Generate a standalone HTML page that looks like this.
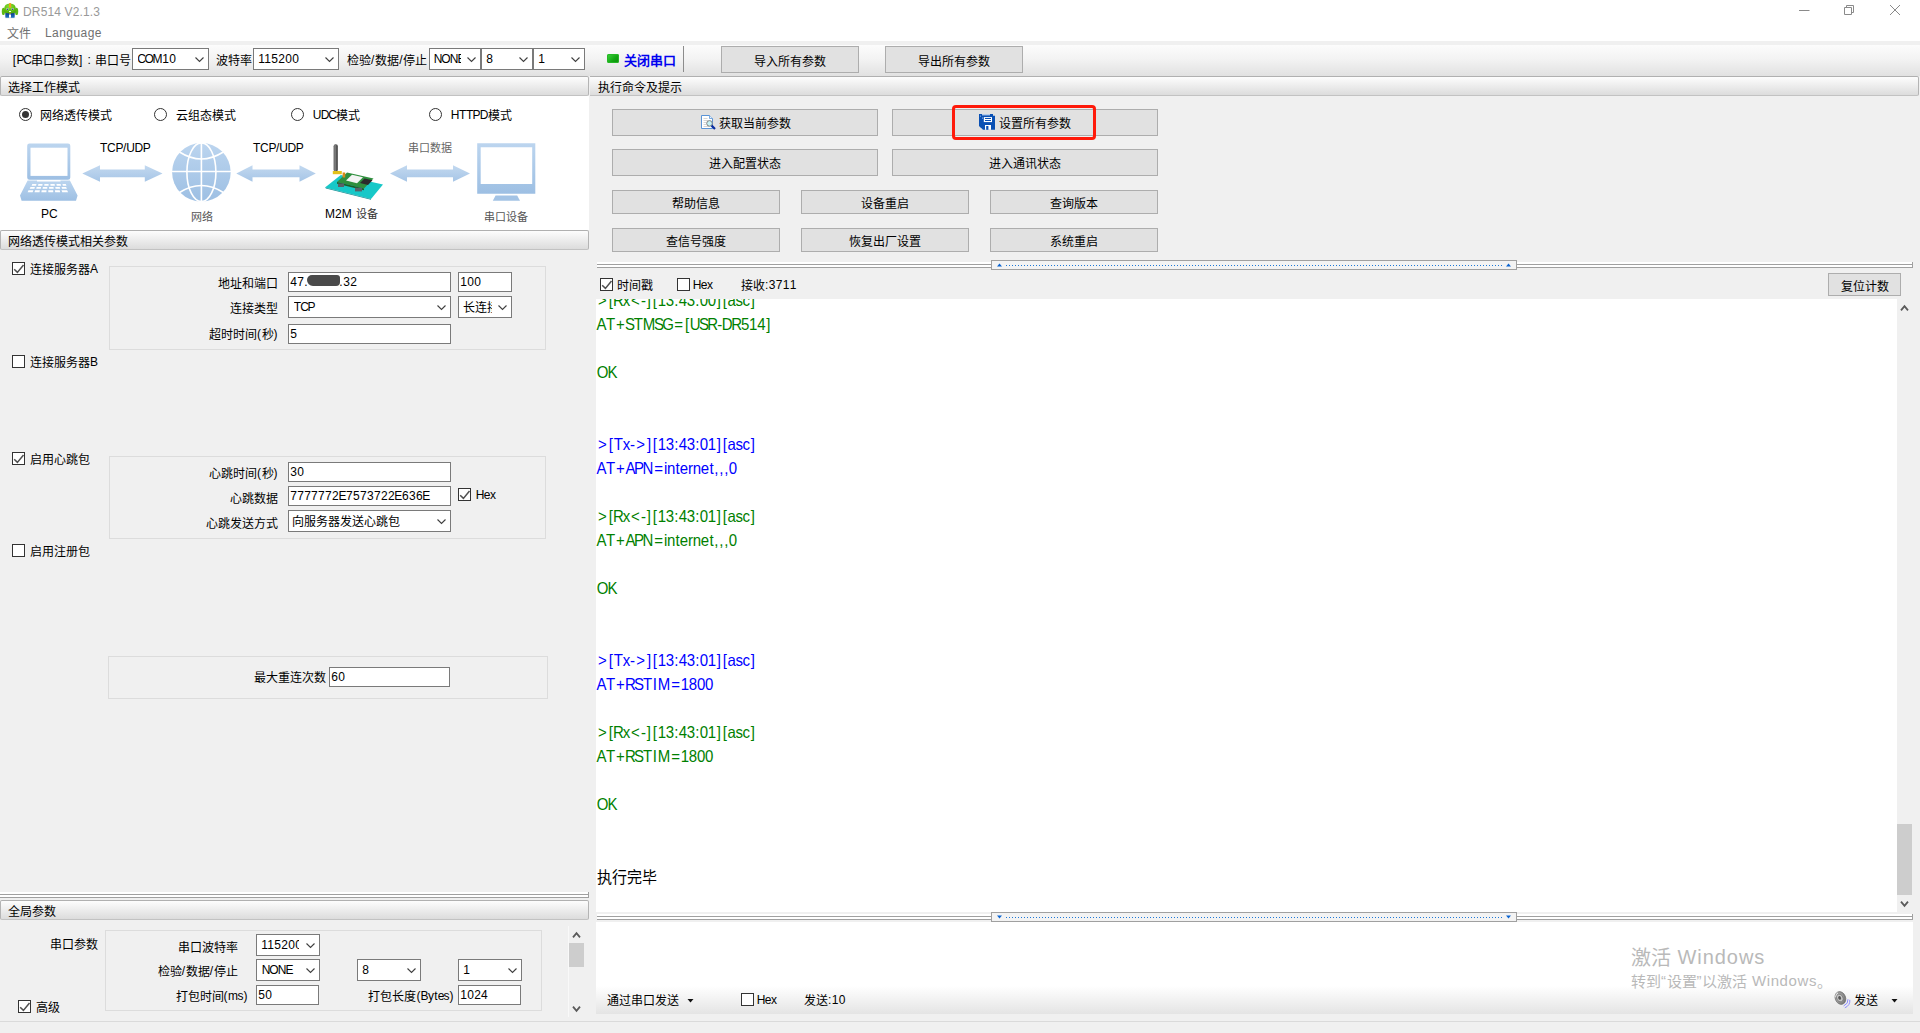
<!DOCTYPE html>
<html lang="zh-CN"><head><meta charset="utf-8"><title>DR514 V2.1.3</title>
<style>
html,body{margin:0;padding:0}
body{width:1920px;height:1033px;overflow:hidden;position:relative;background:#f0f0f0;font-family:"Liberation Sans",sans-serif;font-size:12px;color:#000}
body div,.a{position:absolute}
.t{white-space:nowrap;line-height:14px;font-size:12px}
.c{display:inline-block;width:1em;text-align:center;letter-spacing:0;position:relative;top:1px}
.n0 .c{top:0}
.btn{box-sizing:border-box;border:1px solid #adadad;background:#e1e1e1;text-align:center;white-space:nowrap;font-size:12px}
.inp{box-sizing:border-box;border:1px solid #7a7a7a;background:#fff;padding-left:1px;white-space:nowrap;overflow:hidden;font-size:12px}
.clip{position:absolute;top:0;height:100%;overflow:hidden;white-space:nowrap}
.chk{box-sizing:border-box;width:13px;height:13px;border:1px solid #333;background:#fff}
.rad{box-sizing:border-box;width:13px;height:13px;border:1px solid #333;border-radius:50%;background:#fff}
.rad i{position:absolute;left:2px;top:2px;width:7px;height:7px;border-radius:50%;background:#333}
.hdr{box-sizing:border-box;height:20px;line-height:20px;padding-left:6.5px;border:1px solid #b4b4b4;border-top-color:#b0b0b0;border-bottom-color:#c2c2c2;border-radius:2px;background:linear-gradient(#fdfdfd,#dcdcdc);white-space:nowrap;font-size:12px;overflow:hidden}
.grp{box-sizing:border-box;border:1px solid #dcdcdc}
.ln{position:static;height:22.684px;line-height:22.684px;font-size:15px;white-space:nowrap}
.g{color:#008000}.b{color:#0000ff}.k{color:#000}
.blob{display:inline-block;position:absolute;left:18px;top:2px;width:33px;height:11px;background:#4a4a4a;border-radius:5px 3px 4px 6px}
</style></head>
<body>
<div style="left:0px;top:0px;width:1920px;height:41px;background:#fff"></div>
<svg class="a" style="left:0;top:0" width="20" height="20" viewBox="0 0 20 20">
<defs><radialGradient id="gh" cx=".45" cy=".3" r=".8"><stop offset="0" stop-color="#8fdc3a"/><stop offset=".6" stop-color="#5cc010"/><stop offset="1" stop-color="#4a9e0e"/></radialGradient>
<linearGradient id="gp" x1="0" y1="0" x2="0" y2="1"><stop offset="0" stop-color="#0a3488"/><stop offset="1" stop-color="#2273c0"/></linearGradient></defs>
<ellipse cx="10" cy="17.7" rx="5.5" ry=".6" fill="#d8d8d8"/>
<ellipse cx="3.4" cy="11.4" rx="1.6" ry="3.7" fill="#5cb812"/><ellipse cx="16.6" cy="11.4" rx="1.6" ry="3.7" fill="#5cb812"/>
<path d="M5.3 12.4 H14.7 V17 Q14.7 17.7 14 17.7 H11 V14.6 H9 V17.7 H6 Q5.3 17.7 5.3 17 Z" fill="url(#gp)"/>
<path d="M4 10 Q4 3.6 10 3.6 Q16 3.6 16 10 Q16 13.2 13.4 13.2 H6.6 Q4 13.2 4 10 Z" fill="url(#gh)"/>
<rect x="9" y="3" width="2.1" height="4.7" rx=".8" fill="#f2a21e"/>
<circle cx="7.4" cy="9.1" r="1.15" fill="#dfe8d0"/><circle cx="12.6" cy="9.1" r="1.15" fill="#dfe8d0"/>
<circle cx="7.4" cy="9.2" r=".75" fill="#2c2a98"/><circle cx="12.6" cy="9.2" r=".75" fill="#2c2a98"/>
<rect x="9" y="11.1" width="2" height=".9" rx=".2" fill="#fff"/>
<rect x="9.3" y="12.6" width="1.4" height="1.4" fill="#c8a01c"/>
</svg>
<div class="t" style="left:23px;top:5px;color:#999;font-size:12px;letter-spacing:.15px">DR514 V2.1.3</div>
<svg class="a" style="left:1790px;top:0" width="130" height="22" viewBox="0 0 130 22"><g fill="none" stroke="#8a8a8a" stroke-width="1"><path d="M9 10.5 H19.5"/><path d="M54.5 7.5 H61.5 V14.5 H54.5 Z"/><path d="M56.5 7.5 V5.5 H63.5 V12.5 H61.5"/><path d="M100 5 L110 15 M110 5 L100 15"/></g></svg>
<div class="t" style="left:7px;top:26px;color:#707070"><span class="c">文</span><span class="c">件</span></div>
<div class="t" style="left:45px;top:26px;color:#707070;letter-spacing:.45px">Language</div>
<div style="left:0px;top:41px;width:1920px;height:4px;background:#f0f0f0"></div>
<div style="left:0px;top:45px;width:1920px;height:31px;background:linear-gradient(#fcfcfc 0%,#f3f3f3 45%,#e1e1e1 100%)"></div>
<div class="t" style="left:12px;top:53px;"><span style="margin-left:0.8px"></span><span style="letter-spacing:0.3px">[</span><span style="letter-spacing:-1.3px">P</span><span style="letter-spacing:-0.8px">C</span><span class="c">串</span><span class="c">口</span><span class="c">参</span><span style="letter-spacing:0.8px"><span class="c">数</span></span><span style="letter-spacing:1.2px">]</span><span style="letter-spacing:0.7px"> :</span><span style="letter-spacing:0.3px"> </span><span class="c">串</span><span class="c">口</span><span class="c">号</span></div>
<div class="inp" style="left:132px;top:48px;width:77px;height:22px;line-height:20px;padding-left:5px"><span class="clip" style="width:57px"><span style="margin-left:-0.8px"></span><span style="letter-spacing:-1.5px">C</span><span style="letter-spacing:-1.2px">O</span><span style="letter-spacing:-0.3px">M</span><span style="letter-spacing:0.3px">1</span><span style="letter-spacing:0.2px">0</span></span><svg class="a" style="left:62px;top:8px" width="9" height="6" viewBox="0 0 9 6"><path d="M0.5 0.5 L4.5 4.5 L8.5 0.5" fill="none" stroke="#404040" stroke-width="1.1"/></svg></div>
<div class="t" style="left:216px;top:53px;"><span class="c">波</span><span class="c">特</span><span class="c">率</span></div>
<div class="inp" style="left:253px;top:48px;width:86px;height:22px;line-height:20px;padding-left:4px"><span class="clip" style="width:66px"><span style="margin-left:0.2px"></span><span style="letter-spacing:0.3px">11520</span><span style="letter-spacing:0.2px">0</span></span><svg class="a" style="left:71px;top:8px" width="9" height="6" viewBox="0 0 9 6"><path d="M0.5 0.5 L4.5 4.5 L8.5 0.5" fill="none" stroke="#404040" stroke-width="1.1"/></svg></div>
<div class="t" style="left:347px;top:53px;"><span class="c">检</span><span style="letter-spacing:0.8px"><span class="c">验</span>/</span><span class="c">数</span><span style="letter-spacing:0.8px"><span class="c">据</span>/</span><span class="c">停</span><span class="c">止</span></div>
<div class="inp" style="left:429px;top:48px;width:52px;height:22px;line-height:20px;padding-left:4px"><span class="clip" style="width:27px"><span style="margin-left:-0.3px"></span><span style="letter-spacing:-1px">NO</span><span style="letter-spacing:-0.8px">N</span><span style="letter-spacing:-0.5px">E</span></span><svg class="a" style="left:37px;top:8px" width="9" height="6" viewBox="0 0 9 6"><path d="M0.5 0.5 L4.5 4.5 L8.5 0.5" fill="none" stroke="#404040" stroke-width="1.1"/></svg></div>
<div class="inp" style="left:481px;top:48px;width:52px;height:22px;line-height:20px;padding-left:4px"><span class="clip" style="width:32px"><span style="margin-left:0.2px"></span><span style="letter-spacing:0.2px">8</span></span><svg class="a" style="left:37px;top:8px" width="9" height="6" viewBox="0 0 9 6"><path d="M0.5 0.5 L4.5 4.5 L8.5 0.5" fill="none" stroke="#404040" stroke-width="1.1"/></svg></div>
<div class="inp" style="left:533px;top:48px;width:52px;height:22px;line-height:20px;padding-left:4px"><span class="clip" style="width:32px"><span style="margin-left:0.2px"></span><span style="letter-spacing:0.2px">1</span></span><svg class="a" style="left:37px;top:8px" width="9" height="6" viewBox="0 0 9 6"><path d="M0.5 0.5 L4.5 4.5 L8.5 0.5" fill="none" stroke="#404040" stroke-width="1.1"/></svg></div>
<div style="left:607px;top:54px;width:12px;height:9px;background:linear-gradient(135deg,#3fd53f,#12a512 60%,#0c8c0c);border-radius:2px;box-shadow:inset 0 0 0 1px #25b825"></div>
<div class="t" style="left:624px;top:53px;color:#0000f0;font-weight:bold;font-size:13px"><span class="c">关</span><span class="c">闭</span><span class="c">串</span><span class="c">口</span></div>
<div style="left:683px;top:46px;width:1px;height:26px;background:#8c8c8c"></div>
<div class="btn" style="left:721px;top:46px;width:138px;height:27px;line-height:29px"><span class="c">导</span><span class="c">入</span><span class="c">所</span><span class="c">有</span><span class="c">参</span><span class="c">数</span></div>
<div class="btn" style="left:885px;top:46px;width:138px;height:27px;line-height:29px"><span class="c">导</span><span class="c">出</span><span class="c">所</span><span class="c">有</span><span class="c">参</span><span class="c">数</span></div>
<div class="hdr" style="left:0px;top:76px;width:589px"><span class="c">选</span><span class="c">择</span><span class="c">工</span><span class="c">作</span><span class="c">模</span><span class="c">式</span></div>
<div style="left:0px;top:96px;width:589px;height:134px;background:#fff"></div>
<div class="rad" style="left:18.5px;top:108.0px"><i></i></div>
<div class="t" style="left:40px;top:108px;"><span class="c">网</span><span class="c">络</span><span class="c">透</span><span class="c">传</span><span class="c">模</span><span class="c">式</span></div>
<div class="rad" style="left:154.0px;top:108.0px"></div>
<div class="t" style="left:176px;top:108px;"><span class="c">云</span><span class="c">组</span><span class="c">态</span><span class="c">模</span><span class="c">式</span></div>
<div class="rad" style="left:291.0px;top:108.0px"></div>
<div class="t" style="left:313px;top:108px;"><span style="margin-left:-0.3px"></span><span style="letter-spacing:-0.7px">U</span><span style="letter-spacing:-1.2px">D</span><span style="letter-spacing:-0.8px">C</span><span class="c">模</span><span class="c">式</span></div>
<div class="rad" style="left:429.0px;top:108.0px"></div>
<div class="t" style="left:451px;top:108px;"><span style="margin-left:-0.3px"></span><span style="letter-spacing:-0.5px">H</span><span style="letter-spacing:-0.3px">T</span><span style="letter-spacing:-0.7px">T</span><span style="letter-spacing:-0.8px">P</span><span style="letter-spacing:-0.3px">D</span><span class="c">模</span><span class="c">式</span></div>
<svg class="a" style="left:0;top:130px" width="590" height="100" viewBox="0 130 590 100">
<defs>
<linearGradient id="g1" x1="0" y1="0" x2="0" y2="1"><stop offset="0" stop-color="#bcd5ef"/><stop offset="1" stop-color="#9dbfe3"/></linearGradient>
<linearGradient id="g2" x1="0" y1="0" x2="0" y2="1"><stop offset="0" stop-color="#c3d9f0"/><stop offset="1" stop-color="#a6c5e6"/></linearGradient>
</defs>
<!-- laptop -->
<path d="M29.5 143.5 H68 a2.3 2.3 0 0 1 2.3 2.3 V177.4 a2.3 2.3 0 0 1 -2.3 2.3 H29.5 a2.3 2.3 0 0 1 -2.3 -2.3 V145.8 a2.3 2.3 0 0 1 2.3 -2.3 Z" fill="url(#g1)"/>
<rect x="30.5" y="147.7" width="37" height="28.2" fill="#fff"/>
<path d="M27.6 180.4 H37 V181.5 H60.5 V180.4 H69.9 L77.6 195.4 L76 200.8 H21.6 L20 195.4 Z" fill="url(#g1)"/>
<g fill="#fff"><path d="M32.3 184 h4.2 l-.5 1.7 h-4.4z M38.4 184 h4.2 l-.3 1.7 h-4.3z M44.4 184 h4.2 v1.7 h-4.3z M50.4 184 h4.2 l.3 1.7 h-4.4z M56.4 184 h4.2 l.5 1.7 h-4.3z M62.4 184 h3.4 l.7 1.7 h-3.6z"/>
<path d="M30.5 186.9 h4.4 l-.5 1.9 h-4.7z M36.7 186.9 h4.4 l-.3 1.9 h-4.6z M42.9 186.9 h4.4 l-.1 1.9 h-4.6z M49.1 186.9 h4.4 l.2 1.9 h-4.6z M55.3 186.9 h4.4 l.5 1.9 h-4.6z M61.5 186.9 h4.6 l.8 1.9 h-4.8z"/>
<path d="M28.5 190.2 h4.8 l-.6 2.1 h-5.1z M35.1 190.2 h4.8 l-.4 2.1 h-5z M41.7 190.2 h4.8 l-.1 2.1 h-5z M48.3 190.2 h4.8 l.2 2.1 h-5z M54.9 190.2 h4.8 l.5 2.1 h-5z M61.5 190.2 h5.6 l1 2.1 h-5.9z"/></g>
<!-- arrows -->
<g fill="url(#g2)">
<path d="M82.3 173.4 L100 165.2 V169.4 H144.8 V165.2 L162.5 173.4 L144.8 181.8 V177.3 H100 V181.8 Z"/>
<path d="M236.3 173.4 L252.5 165.2 V169.4 H299.5 V165.2 L315.8 173.4 L299.5 181.8 V177.3 H252.5 V181.8 Z"/>
<path d="M390 173.4 L407 165.2 V169.4 H453 V165.2 L470 173.4 L453 181.8 V177.3 H407 V181.8 Z"/>
</g>
<!-- globe -->
<circle cx="201.4" cy="172.2" r="29.3" fill="url(#g1)"/>
<g fill="none" stroke="#fff" stroke-width="1.6">
<path d="M201.4 142 V203"/><path d="M171 171.5 H232"/>
<ellipse cx="201.4" cy="172.2" rx="14.5" ry="29.3"/>
<path d="M179.5 152 Q201.4 166 223.3 152"/><path d="M179.5 192.5 Q201.4 178.5 223.3 192.5"/>
</g>
<!-- m2m device -->
<path d="M325 187.5 L340.8 175 L383 184.5 L371 199 Z" fill="#17c8c8"/>
<path d="M326 188.6 L371 199.8 L371 199 L325 187.5Z" fill="#0e8f94"/>
<path d="M337 182 L347 172.5 L373.5 178.5 L364 188.5 Z" fill="#2f8f3e"/>
<path d="M337 182 L364 188.5 V190.3 L337 183.8Z" fill="#1d5e28"/>
<path d="M346 180.5 L352 174.8 L363 177.3 L357 183.2 Z" fill="#f4f4f4"/>
<path d="M360 183 L364.5 178.5 L372.5 180.3 L368 185 Z" fill="#2b2b2b"/>
<rect x="338" y="183.5" width="6" height="3.5" fill="#5a6068"/><rect x="355" y="187.8" width="7" height="3.6" fill="#5a6068"/>
<rect x="333.6" y="144.2" width="4.3" height="27.5" rx="2" fill="#555"/>
<rect x="334.4" y="145" width="1.3" height="26" fill="#888"/>
<path d="M332.8 171 h9 v3.2 h-9z" fill="#e3c21a"/><rect x="342.6" y="172.5" width="2.6" height="5" fill="#d98a1c"/>
<!-- monitor -->
<path d="M477.2 143.3 H535.3 V193.8 H477.2 Z M480.7 147.2 V184 H532.2 V147.2 Z" fill="url(#g1)" fill-rule="evenodd"/>
<path d="M495.6 195.6 H517.2 L520 200.8 H492.8 Z" fill="#a3c3e5"/>
</svg>
<div class="t" style="left:100px;top:141px;font-size:12px;letter-spacing:-.3px">TCP/UDP</div>
<div class="t" style="left:253px;top:141px;font-size:12px;letter-spacing:-.3px">TCP/UDP</div>
<div class="t" style="left:41px;top:207px;font-size:12px">PC</div>
<div class="t s" style="left:191px;top:209px;font-size:11px;color:#555"><span class="c">网</span><span class="c">络</span></div>
<div class="t" style="left:325px;top:207px;font-size:12px">M2M <span class="s n0" style="font-size:11px;color:#333;margin-left:1px"><span class="c">设</span><span class="c">备</span></span></div>
<div class="t s" style="left:408px;top:140px;font-size:11px;color:#666"><span class="c">串</span><span class="c">口</span><span class="c">数</span><span class="c">据</span></div>
<div class="t s" style="left:484px;top:209px;font-size:11px;color:#555"><span class="c">串</span><span class="c">口</span><span class="c">设</span><span class="c">备</span></div>
<div class="hdr" style="left:0px;top:230px;width:589px"><span class="c">网</span><span class="c">络</span><span class="c">透</span><span class="c">传</span><span class="c">模</span><span class="c">式</span><span class="c">相</span><span class="c">关</span><span class="c">参</span><span class="c">数</span></div>
<div class="chk" style="left:12px;top:262px"><svg width="13" height="13" viewBox="0 0 13 13" style="position:absolute;left:-1px;top:-1px"><path d="M2.2 7.2 L5.4 10.4 L11.5 3" fill="none" stroke="#505050" stroke-width="1.5"/></svg></div>
<div class="t" style="left:30px;top:262px;"><span class="c">连</span><span class="c">接</span><span class="c">服</span><span class="c">务</span><span style="letter-spacing:-0.5px"><span class="c">器</span>A</span></div>
<div class="grp" style="left:109px;top:266px;width:437px;height:84px"></div>
<div class="t" style="left:150px;top:276px;width:128px;text-align:right;"><span class="c">地</span><span class="c">址</span><span class="c">和</span><span class="c">端</span><span class="c">口</span></div>
<div class="inp" style="left:288px;top:272px;width:163px;height:20px;line-height:18px;"><span style="margin-left:0.2px"></span><span style="letter-spacing:0.3px">4</span><span style="letter-spacing:0.5px">7</span><span style="letter-spacing:0.3px">.</span><span class="blob"></span><span class="a" style="left:50px;top:0"><span style="margin-left:0.3px"></span><span style="letter-spacing:0.5px">.</span><span style="letter-spacing:0.3px">3</span><span style="letter-spacing:0.2px">2</span></span></div>
<div class="inp" style="left:458px;top:272px;width:54px;height:20px;line-height:18px;"><span style="margin-left:0.2px"></span><span style="letter-spacing:0.3px">10</span><span style="letter-spacing:0.2px">0</span></div>
<div class="t" style="left:150px;top:301px;width:128px;text-align:right;"><span class="c">连</span><span class="c">接</span><span class="c">类</span><span class="c">型</span></div>
<div class="inp" style="left:288px;top:296px;width:163px;height:22px;line-height:20px;padding-left:5px"><span class="clip" style="width:143px"><span style="margin-left:-0.2px"></span><span style="letter-spacing:-1px">T</span><span style="letter-spacing:-1.3px">C</span><span style="letter-spacing:-0.5px">P</span></span><svg class="a" style="left:148px;top:8px" width="9" height="6" viewBox="0 0 9 6"><path d="M0.5 0.5 L4.5 4.5 L8.5 0.5" fill="none" stroke="#404040" stroke-width="1.1"/></svg></div>
<div class="inp" style="left:458px;top:296px;width:54px;height:22px;line-height:20px;padding-left:4px"><span class="clip" style="width:29px"><span class="c">长</span><span class="c">连</span><span class="c">接</span></span><svg class="a" style="left:39px;top:8px" width="9" height="6" viewBox="0 0 9 6"><path d="M0.5 0.5 L4.5 4.5 L8.5 0.5" fill="none" stroke="#404040" stroke-width="1.1"/></svg></div>
<div class="t" style="left:150px;top:327px;width:128px;text-align:right;"><span class="c">超</span><span class="c">时</span><span class="c">时</span><span style="letter-spacing:0.5px"><span class="c">间</span>(<span class="c">秒</span>)</span></div>
<div class="inp" style="left:288px;top:324px;width:163px;height:20px;line-height:18px;"><span style="margin-left:0.2px"></span><span style="letter-spacing:0.2px">5</span></div>
<div class="chk" style="left:12px;top:355px"></div>
<div class="t" style="left:30px;top:355px;"><span class="c">连</span><span class="c">接</span><span class="c">服</span><span class="c">务</span><span style="letter-spacing:-0.5px"><span class="c">器</span>B</span></div>
<div class="chk" style="left:12px;top:452px"><svg width="13" height="13" viewBox="0 0 13 13" style="position:absolute;left:-1px;top:-1px"><path d="M2.2 7.2 L5.4 10.4 L11.5 3" fill="none" stroke="#505050" stroke-width="1.5"/></svg></div>
<div class="t" style="left:30px;top:452px;"><span class="c">启</span><span class="c">用</span><span class="c">心</span><span class="c">跳</span><span class="c">包</span></div>
<div class="grp" style="left:109px;top:456px;width:437px;height:83px"></div>
<div class="t" style="left:150px;top:466px;width:128px;text-align:right;"><span class="c">心</span><span class="c">跳</span><span class="c">时</span><span style="letter-spacing:0.5px"><span class="c">间</span>(<span class="c">秒</span>)</span></div>
<div class="inp" style="left:288px;top:462px;width:163px;height:20px;line-height:18px;"><span style="margin-left:0.2px"></span><span style="letter-spacing:0.3px">3</span><span style="letter-spacing:0.2px">0</span></div>
<div class="t" style="left:150px;top:491px;width:128px;text-align:right;"><span class="c">心</span><span class="c">跳</span><span class="c">数</span><span class="c">据</span></div>
<div class="inp" style="left:288px;top:486px;width:163px;height:20px;line-height:18px;"><span style="margin-left:0.2px"></span><span style="letter-spacing:0.3px">777777</span><span style="letter-spacing:-0.3px">2E</span><span style="letter-spacing:0.3px">757372</span><span style="letter-spacing:-0.3px">2E</span><span style="letter-spacing:0.3px">63</span><span style="letter-spacing:-0.3px">6</span><span style="letter-spacing:-0.5px">E</span></div>
<div class="chk" style="left:458px;top:488px"><svg width="13" height="13" viewBox="0 0 13 13" style="position:absolute;left:-1px;top:-1px"><path d="M2.2 7.2 L5.4 10.4 L11.5 3" fill="none" stroke="#505050" stroke-width="1.5"/></svg></div>
<div class="t" style="left:476px;top:488px;"><span style="margin-left:-0.3px"></span><span style="letter-spacing:-0.7px">H</span><span style="letter-spacing:-0.3px">e</span>x</div>
<div class="t" style="left:150px;top:516px;width:128px;text-align:right;"><span class="c">心</span><span class="c">跳</span><span class="c">发</span><span class="c">送</span><span class="c">方</span><span class="c">式</span></div>
<div class="inp" style="left:288px;top:510px;width:163px;height:22px;line-height:20px;padding-left:3px"><span class="clip" style="width:143px"><span class="c">向</span><span class="c">服</span><span class="c">务</span><span class="c">器</span><span class="c">发</span><span class="c">送</span><span class="c">心</span><span class="c">跳</span><span class="c">包</span></span><svg class="a" style="left:148px;top:8px" width="9" height="6" viewBox="0 0 9 6"><path d="M0.5 0.5 L4.5 4.5 L8.5 0.5" fill="none" stroke="#404040" stroke-width="1.1"/></svg></div>
<div class="chk" style="left:12px;top:544px"></div>
<div class="t" style="left:30px;top:544px;"><span class="c">启</span><span class="c">用</span><span class="c">注</span><span class="c">册</span><span class="c">包</span></div>
<div class="grp" style="left:108px;top:656px;width:440px;height:43px"></div>
<div class="t" style="left:200px;top:670px;width:126px;text-align:right;"><span class="c">最</span><span class="c">大</span><span class="c">重</span><span class="c">连</span><span class="c">次</span><span class="c">数</span></div>
<div class="inp" style="left:329px;top:667px;width:121px;height:20px;line-height:18px;"><span style="margin-left:0.2px"></span><span style="letter-spacing:0.3px">6</span><span style="letter-spacing:0.2px">0</span></div>
<div style="left:0px;top:892px;width:589px;height:6px;background:#fff"></div>
<div style="left:0px;top:894px;width:589px;height:1px;background:#a0a0a0"></div>
<div style="left:0px;top:897px;width:589px;height:1px;background:#a0a0a0"></div>
<div style="left:588px;top:892px;width:1px;height:6px;background:#a0a0a0"></div>
<div class="hdr" style="left:0px;top:900px;width:589px"><span class="c">全</span><span class="c">局</span><span class="c">参</span><span class="c">数</span></div>
<div class="t" style="left:50px;top:937px;"><span class="c">串</span><span class="c">口</span><span class="c">参</span><span class="c">数</span></div>
<div class="grp" style="left:105px;top:930px;width:437px;height:81px"></div>
<div class="t" style="left:140px;top:940px;width:98px;text-align:right;"><span class="c">串</span><span class="c">口</span><span class="c">波</span><span class="c">特</span><span class="c">率</span></div>
<div class="inp" style="left:256px;top:934px;width:64px;height:22px;line-height:20px;padding-left:4px"><span class="clip" style="width:38px"><span style="margin-left:0.2px"></span><span style="letter-spacing:0.3px">11520</span><span style="letter-spacing:0.2px">0</span></span><svg class="a" style="left:49px;top:8px" width="9" height="6" viewBox="0 0 9 6"><path d="M0.5 0.5 L4.5 4.5 L8.5 0.5" fill="none" stroke="#404040" stroke-width="1.1"/></svg></div>
<div class="t" style="left:140px;top:964px;width:98px;text-align:right;"><span class="c">检</span><span style="letter-spacing:0.8px"><span class="c">验</span>/</span><span class="c">数</span><span style="letter-spacing:0.8px"><span class="c">据</span>/</span><span class="c">停</span><span class="c">止</span></div>
<div class="inp" style="left:256px;top:959px;width:64px;height:22px;line-height:20px;padding-left:5px"><span class="clip" style="width:44px"><span style="margin-left:-0.3px"></span><span style="letter-spacing:-1px">NO</span><span style="letter-spacing:-0.8px">N</span><span style="letter-spacing:-0.5px">E</span></span><svg class="a" style="left:49px;top:8px" width="9" height="6" viewBox="0 0 9 6"><path d="M0.5 0.5 L4.5 4.5 L8.5 0.5" fill="none" stroke="#404040" stroke-width="1.1"/></svg></div>
<div class="inp" style="left:357px;top:959px;width:64px;height:22px;line-height:20px;padding-left:4px"><span class="clip" style="width:44px"><span style="margin-left:0.2px"></span><span style="letter-spacing:0.2px">8</span></span><svg class="a" style="left:49px;top:8px" width="9" height="6" viewBox="0 0 9 6"><path d="M0.5 0.5 L4.5 4.5 L8.5 0.5" fill="none" stroke="#404040" stroke-width="1.1"/></svg></div>
<div class="inp" style="left:458px;top:959px;width:64px;height:22px;line-height:20px;padding-left:4px"><span class="clip" style="width:44px"><span style="margin-left:0.2px"></span><span style="letter-spacing:0.2px">1</span></span><svg class="a" style="left:49px;top:8px" width="9" height="6" viewBox="0 0 9 6"><path d="M0.5 0.5 L4.5 4.5 L8.5 0.5" fill="none" stroke="#404040" stroke-width="1.1"/></svg></div>
<div class="t" style="left:140px;top:989px;width:108px;text-align:right;"><span class="c">打</span><span class="c">包</span><span class="c">时</span><span style="letter-spacing:0.5px"><span class="c">间</span>(</span><span style="letter-spacing:-0.5px">m</span>s<span style="letter-spacing:0.5px">)</span></div>
<div class="inp" style="left:256px;top:985px;width:63px;height:20px;line-height:18px;"><span style="margin-left:0.2px"></span><span style="letter-spacing:0.3px">5</span><span style="letter-spacing:0.2px">0</span></div>
<div class="t" style="left:340px;top:989px;width:114px;text-align:right;"><span class="c">打</span><span class="c">包</span><span class="c">长</span><span style="letter-spacing:0.5px"><span class="c">度</span></span>(<span style="letter-spacing:-0.5px">B</span><span style="letter-spacing:0.3px">y</span>t<span style="letter-spacing:-0.8px">e</span>s<span style="letter-spacing:0.5px">)</span></div>
<div class="inp" style="left:458px;top:985px;width:63px;height:20px;line-height:18px;"><span style="margin-left:0.2px"></span><span style="letter-spacing:0.3px">102</span><span style="letter-spacing:0.2px">4</span></div>
<div style="left:568px;top:926px;width:1px;height:91px;background:#f9f9f9"></div>
<div style="left:569px;top:943px;width:15px;height:24px;background:#cdcdcd"></div>
<svg class="a" style="left:572px;top:931px" width="9" height="8" viewBox="0 0 9 8"><path d="M1 6.3 L4.5 2.2 L8 6.3" fill="none" stroke="#5a5a5a" stroke-width="1.8"/></svg>
<svg class="a" style="left:572px;top:1005px" width="9" height="8" viewBox="0 0 9 8"><path d="M1 1.7 L4.5 5.8 L8 1.7" fill="none" stroke="#5a5a5a" stroke-width="1.8"/></svg>
<div class="chk" style="left:18px;top:1000px"><svg width="13" height="13" viewBox="0 0 13 13" style="position:absolute;left:-1px;top:-1px"><path d="M2.2 7.2 L5.4 10.4 L11.5 3" fill="none" stroke="#505050" stroke-width="1.5"/></svg></div>
<div class="t" style="left:36px;top:1000px;"><span class="c">高</span><span class="c">级</span></div>
<div class="hdr" style="left:590px;top:76px;width:1329px;padding-left:7.5px;border-left:none;border-radius:0 2px 2px 0"><span class="c">执</span><span class="c">行</span><span class="c">命</span><span class="c">令</span><span class="c">及</span><span class="c">提</span><span class="c">示</span></div>
<div class="btn" style="left:612px;top:109px;width:266px;height:27px;line-height:27px"><svg width="16" height="16" viewBox="0 0 16 16" style="vertical-align:-3px;margin-right:3px"><path d="M1.5 1.5 H9.5 L12.5 4.5 V14.5 H1.5 Z" fill="#fff" stroke="#5b94d6" stroke-width="1"/><path d="M9.5 1.5 V4.5 H12.5" fill="#e8f1fb" stroke="#5b94d6" stroke-width=".8"/><path d="M3.5 4.5 H7.5 M3.5 6.5 H8 M3.5 8.5 H6 M3.5 10.5 H6 M3.5 12.5 H9" stroke="#d6d6d6" stroke-width="1"/><circle cx="9.5" cy="9.4" r="2.8" fill="#c5f2f6" stroke="#7d7d7d" stroke-width="1"/><path d="M11.6 11.6 L15 15" stroke="#0a2fa0" stroke-width="2.2"/></svg><span class="c">获</span><span class="c">取</span><span class="c">当</span><span class="c">前</span><span class="c">参</span><span class="c">数</span></div>
<div class="btn" style="left:892px;top:109px;width:266px;height:27px;line-height:27px"><svg width="16" height="16" viewBox="0 0 16 16" style="vertical-align:-3px;margin-right:4px"><path d="M0 0 H14 V14 H2 L0 12 Z" fill="#0a50b4"/><path d="M2 1.7 H16 V15.8 H4 L2 13.8 Z" fill="#0a50b4"/><path d="M3 0.8 H11" stroke="#fff" stroke-width="1"/><rect x="4.8" y="3.1" width="8.2" height="5" fill="#fff"/><path d="M6 4.5 H12 M6 6.5 H12" stroke="#0a50b4" stroke-width="1"/><rect x="6" y="11" width="6" height="4.8" fill="#fff"/><rect x="7.2" y="12" width="2.2" height="3.8" fill="#0a50b4"/><rect x="1" y="1.6" width="1" height="1" fill="#9cc0f0"/><rect x="3" y="3.6" width="1" height="1" fill="#9cc0f0"/></svg><span class="c">设</span><span class="c">置</span><span class="c">所</span><span class="c">有</span><span class="c">参</span><span class="c">数</span></div>
<div style="left:952px;top:105px;width:144px;height:35px;border:3px solid #ff1a0a;border-radius:4px;box-sizing:border-box"></div>
<div class="btn" style="left:612px;top:149px;width:266px;height:27px;line-height:27px"><span class="c">进</span><span class="c">入</span><span class="c">配</span><span class="c">置</span><span class="c">状</span><span class="c">态</span></div>
<div class="btn" style="left:892px;top:149px;width:266px;height:27px;line-height:27px"><span class="c">进</span><span class="c">入</span><span class="c">通</span><span class="c">讯</span><span class="c">状</span><span class="c">态</span></div>
<div class="btn" style="left:612px;top:190px;width:168px;height:24px;line-height:24px"><span class="c">帮</span><span class="c">助</span><span class="c">信</span><span class="c">息</span></div>
<div class="btn" style="left:801px;top:190px;width:168px;height:24px;line-height:24px"><span class="c">设</span><span class="c">备</span><span class="c">重</span><span class="c">启</span></div>
<div class="btn" style="left:990px;top:190px;width:168px;height:24px;line-height:24px"><span class="c">查</span><span class="c">询</span><span class="c">版</span><span class="c">本</span></div>
<div class="btn" style="left:612px;top:228px;width:168px;height:24px;line-height:24px"><span class="c">查</span><span class="c">信</span><span class="c">号</span><span class="c">强</span><span class="c">度</span></div>
<div class="btn" style="left:801px;top:228px;width:168px;height:24px;line-height:24px"><span class="c">恢</span><span class="c">复</span><span class="c">出</span><span class="c">厂</span><span class="c">设</span><span class="c">置</span></div>
<div class="btn" style="left:990px;top:228px;width:168px;height:24px;line-height:24px"><span class="c">系</span><span class="c">统</span><span class="c">重</span><span class="c">启</span></div>
<div style="left:597px;top:262px;width:1316px;height:6px;background:#fff"></div>
<div style="left:597px;top:264px;width:1316px;height:1px;background:#a0a0a0"></div>
<div style="left:597px;top:267px;width:1316px;height:1px;background:#a0a0a0"></div>
<div style="left:1912px;top:262px;width:1px;height:6px;background:#a0a0a0"></div>
<div class="a" style="left:991px;top:260px;width:526px;height:10px;box-sizing:border-box;border:1px solid #a0a0a0;background:#f3f3f3"><svg class="a" style="left:5px;top:2px" width="5" height="4" viewBox="0 0 5 4"><path d="M0 3.5 L2.5 0.5 L5 3.5Z" fill="#0a64d2"/></svg><svg class="a" style="left:514px;top:2px" width="5" height="4" viewBox="0 0 5 4"><path d="M0 3.5 L2.5 0.5 L5 3.5Z" fill="#0a64d2"/></svg><div class="a" style="left:14px;top:4px;width:496px;height:1px;background-image:linear-gradient(90deg,#1c78d8 1px,transparent 1px);background-size:3px 1px"></div></div>
<div class="chk" style="left:600px;top:278px"><svg width="13" height="13" viewBox="0 0 13 13" style="position:absolute;left:-1px;top:-1px"><path d="M2.2 7.2 L5.4 10.4 L11.5 3" fill="none" stroke="#505050" stroke-width="1.5"/></svg></div>
<div class="t" style="left:617px;top:278px;"><span class="c">时</span><span class="c">间</span><span class="c">戳</span></div>
<div class="chk" style="left:677px;top:278px"></div>
<div class="t" style="left:693px;top:278px;"><span style="margin-left:-0.3px"></span><span style="letter-spacing:-0.7px">H</span><span style="letter-spacing:-0.3px">e</span>x</div>
<div class="t" style="left:741px;top:278px;"><span class="c">接</span><span style="letter-spacing:0.3px"><span class="c">收</span></span><span style="letter-spacing:0.5px">:</span><span style="letter-spacing:0.3px">371</span><span style="letter-spacing:0.2px">1</span></div>
<div class="btn" style="left:1828px;top:273px;width:73px;height:23px;line-height:25px"><span class="c">复</span><span class="c">位</span><span class="c">计</span><span class="c">数</span></div>
<div class="a" style="left:596px;top:299px;width:1301px;height:613px;background:#fff;overflow:hidden"><div class="a" style="left:1px;top:-10.5px;transform:scaleY(1.058);transform-origin:0 0"><div class="ln g"><span style="margin-left:1.1px"></span><span style="letter-spacing:2px">&gt;</span>[<span style="letter-spacing:-1.2px">R</span><span style="letter-spacing:0.9px">x</span><span style="letter-spacing:1.1px">&lt;</span><span style="letter-spacing:0.9px">-</span><span style="letter-spacing:1.8px">]</span><span style="letter-spacing:0.7px">[</span><span style="letter-spacing:-0.3px">1</span><span style="letter-spacing:0.2px">3:</span><span style="letter-spacing:-0.3px">4</span><span style="letter-spacing:0.2px">3:</span><span style="letter-spacing:-0.3px">0</span><span style="letter-spacing:0.7px">0</span><span style="letter-spacing:1.8px">]</span><span style="letter-spacing:0.7px">[</span><span style="letter-spacing:-0.4px">a</span><span style="letter-spacing:-0.5px">s</span><span style="letter-spacing:0.7px">c</span><span style="letter-spacing:0.9px">]</span></div><div class="ln g"><span style="margin-left:-0.5px"></span><span style="letter-spacing:-0.6px">A</span><span style="letter-spacing:1px">T</span><span style="letter-spacing:0.1px">+</span><span style="letter-spacing:-1.1px">S</span><span style="letter-spacing:-0.3px">T</span><span style="letter-spacing:-1.2px">M</span><span style="letter-spacing:-1.8px">S</span><span style="letter-spacing:0.3px">G</span><span style="letter-spacing:2px">=</span><span style="letter-spacing:0.5px">[</span><span style="letter-spacing:-1.4px">U</span><span style="letter-spacing:-1.9px">S</span><span style="letter-spacing:-0.9px">R</span><span style="letter-spacing:-0.4px">-</span><span style="letter-spacing:-1.3px">D</span><span style="letter-spacing:-1.1px">R</span><span style="letter-spacing:-0.3px">51</span><span style="letter-spacing:0.7px">4</span><span style="letter-spacing:0.9px">]</span></div><div class="ln ">&nbsp;</div><div class="ln g"><span style="margin-left:-0.3px"></span><span style="letter-spacing:-0.8px">O</span><span style="letter-spacing:-0.5px">K</span></div><div class="ln ">&nbsp;</div><div class="ln ">&nbsp;</div><div class="ln b"><span style="margin-left:1.1px"></span><span style="letter-spacing:2px">&gt;</span><span style="letter-spacing:0.8px">[</span><span style="letter-spacing:-0.3px">T</span><span style="letter-spacing:-0.2px">x</span><span style="letter-spacing:1.1px">-</span><span style="letter-spacing:2px">&gt;</span><span style="letter-spacing:1.8px">]</span><span style="letter-spacing:0.7px">[</span><span style="letter-spacing:-0.3px">1</span><span style="letter-spacing:0.2px">3:</span><span style="letter-spacing:-0.3px">4</span><span style="letter-spacing:0.2px">3:</span><span style="letter-spacing:-0.3px">0</span><span style="letter-spacing:0.7px">1</span><span style="letter-spacing:1.8px">]</span><span style="letter-spacing:0.7px">[</span><span style="letter-spacing:-0.4px">a</span><span style="letter-spacing:-0.5px">s</span><span style="letter-spacing:0.7px">c</span><span style="letter-spacing:0.9px">]</span></div><div class="ln b"><span style="margin-left:-0.5px"></span><span style="letter-spacing:-0.6px">A</span><span style="letter-spacing:1px">T</span><span style="letter-spacing:0.6px">+</span><span style="letter-spacing:-1.5px">A</span><span style="letter-spacing:-1.4px">P</span><span style="letter-spacing:0.7px">N</span><span style="letter-spacing:1px">=</span><span style="letter-spacing:-0.3px">i</span><span style="letter-spacing:0.2px">nt</span><span style="letter-spacing:-0.2px">er</span><span style="letter-spacing:-0.3px">n</span><span style="letter-spacing:0.2px">e</span><span style="letter-spacing:0.8px">t,,</span><span style="letter-spacing:0.2px">,</span><span style="letter-spacing:-0.2px">0</span></div><div class="ln ">&nbsp;</div><div class="ln g"><span style="margin-left:1.1px"></span><span style="letter-spacing:2px">&gt;</span>[<span style="letter-spacing:-1.2px">R</span><span style="letter-spacing:0.9px">x</span><span style="letter-spacing:1.1px">&lt;</span><span style="letter-spacing:0.9px">-</span><span style="letter-spacing:1.8px">]</span><span style="letter-spacing:0.7px">[</span><span style="letter-spacing:-0.3px">1</span><span style="letter-spacing:0.2px">3:</span><span style="letter-spacing:-0.3px">4</span><span style="letter-spacing:0.2px">3:</span><span style="letter-spacing:-0.3px">0</span><span style="letter-spacing:0.7px">1</span><span style="letter-spacing:1.8px">]</span><span style="letter-spacing:0.7px">[</span><span style="letter-spacing:-0.4px">a</span><span style="letter-spacing:-0.5px">s</span><span style="letter-spacing:0.7px">c</span><span style="letter-spacing:0.9px">]</span></div><div class="ln g"><span style="margin-left:-0.5px"></span><span style="letter-spacing:-0.6px">A</span><span style="letter-spacing:1px">T</span><span style="letter-spacing:0.6px">+</span><span style="letter-spacing:-1.5px">A</span><span style="letter-spacing:-1.4px">P</span><span style="letter-spacing:0.7px">N</span><span style="letter-spacing:1px">=</span><span style="letter-spacing:-0.3px">i</span><span style="letter-spacing:0.2px">nt</span><span style="letter-spacing:-0.2px">er</span><span style="letter-spacing:-0.3px">n</span><span style="letter-spacing:0.2px">e</span><span style="letter-spacing:0.8px">t,,</span><span style="letter-spacing:0.2px">,</span><span style="letter-spacing:-0.2px">0</span></div><div class="ln ">&nbsp;</div><div class="ln g"><span style="margin-left:-0.3px"></span><span style="letter-spacing:-0.8px">O</span><span style="letter-spacing:-0.5px">K</span></div><div class="ln ">&nbsp;</div><div class="ln ">&nbsp;</div><div class="ln b"><span style="margin-left:1.1px"></span><span style="letter-spacing:2px">&gt;</span><span style="letter-spacing:0.8px">[</span><span style="letter-spacing:-0.3px">T</span><span style="letter-spacing:-0.2px">x</span><span style="letter-spacing:1.1px">-</span><span style="letter-spacing:2px">&gt;</span><span style="letter-spacing:1.8px">]</span><span style="letter-spacing:0.7px">[</span><span style="letter-spacing:-0.3px">1</span><span style="letter-spacing:0.2px">3:</span><span style="letter-spacing:-0.3px">4</span><span style="letter-spacing:0.2px">3:</span><span style="letter-spacing:-0.3px">0</span><span style="letter-spacing:0.7px">1</span><span style="letter-spacing:1.8px">]</span><span style="letter-spacing:0.7px">[</span><span style="letter-spacing:-0.4px">a</span><span style="letter-spacing:-0.5px">s</span><span style="letter-spacing:0.7px">c</span><span style="letter-spacing:0.9px">]</span></div><div class="ln b"><span style="margin-left:-0.5px"></span><span style="letter-spacing:-0.6px">A</span><span style="letter-spacing:1px">T</span><span style="letter-spacing:0.2px">+</span><span style="letter-spacing:-1.9px">R</span><span style="letter-spacing:-1.1px">S</span><span style="letter-spacing:0.8px">T</span><span style="letter-spacing:0.7px">I</span><span style="letter-spacing:0.9px">M=</span><span style="letter-spacing:-0.3px">180</span><span style="letter-spacing:-0.2px">0</span></div><div class="ln ">&nbsp;</div><div class="ln g"><span style="margin-left:1.1px"></span><span style="letter-spacing:2px">&gt;</span>[<span style="letter-spacing:-1.2px">R</span><span style="letter-spacing:0.9px">x</span><span style="letter-spacing:1.1px">&lt;</span><span style="letter-spacing:0.9px">-</span><span style="letter-spacing:1.8px">]</span><span style="letter-spacing:0.7px">[</span><span style="letter-spacing:-0.3px">1</span><span style="letter-spacing:0.2px">3:</span><span style="letter-spacing:-0.3px">4</span><span style="letter-spacing:0.2px">3:</span><span style="letter-spacing:-0.3px">0</span><span style="letter-spacing:0.7px">1</span><span style="letter-spacing:1.8px">]</span><span style="letter-spacing:0.7px">[</span><span style="letter-spacing:-0.4px">a</span><span style="letter-spacing:-0.5px">s</span><span style="letter-spacing:0.7px">c</span><span style="letter-spacing:0.9px">]</span></div><div class="ln g"><span style="margin-left:-0.5px"></span><span style="letter-spacing:-0.6px">A</span><span style="letter-spacing:1px">T</span><span style="letter-spacing:0.2px">+</span><span style="letter-spacing:-1.9px">R</span><span style="letter-spacing:-1.1px">S</span><span style="letter-spacing:0.8px">T</span><span style="letter-spacing:0.7px">I</span><span style="letter-spacing:0.9px">M=</span><span style="letter-spacing:-0.3px">180</span><span style="letter-spacing:-0.2px">0</span></div><div class="ln ">&nbsp;</div><div class="ln g"><span style="margin-left:-0.3px"></span><span style="letter-spacing:-0.8px">O</span><span style="letter-spacing:-0.5px">K</span></div><div class="ln ">&nbsp;</div><div class="ln ">&nbsp;</div><div class="ln k"><span class="c">执</span><span class="c">行</span><span class="c">完</span><span class="c">毕</span></div></div></div>
<div style="left:1897px;top:299px;width:16px;height:613px;background:#f0f0f0"></div>
<div style="left:1897px;top:824px;width:15px;height:71px;background:#cdcdcd"></div>
<svg class="a" style="left:1900px;top:304px" width="9" height="8" viewBox="0 0 9 8"><path d="M1 6.3 L4.5 2.2 L8 6.3" fill="none" stroke="#5a5a5a" stroke-width="1.8"/></svg>
<svg class="a" style="left:1900px;top:900px" width="9" height="8" viewBox="0 0 9 8"><path d="M1 1.7 L4.5 5.8 L8 1.7" fill="none" stroke="#5a5a5a" stroke-width="1.8"/></svg>
<div style="left:596px;top:922px;width:1317px;height:64px;background:#fff"></div>
<div style="left:596px;top:986px;width:1317px;height:28px;background:linear-gradient(#ffffff,#e4e4e4)"></div>
<div style="left:597px;top:914px;width:1316px;height:6px;background:#fff"></div>
<div style="left:597px;top:916px;width:1316px;height:1px;background:#a0a0a0"></div>
<div style="left:597px;top:919px;width:1316px;height:1px;background:#a0a0a0"></div>
<div style="left:1912px;top:914px;width:1px;height:6px;background:#a0a0a0"></div>
<div class="a" style="left:991px;top:912px;width:526px;height:10px;box-sizing:border-box;border:1px solid #a0a0a0;background:#f3f3f3"><svg class="a" style="left:5px;top:2px" width="5" height="4" viewBox="0 0 5 4"><path d="M0 0.5 L2.5 3.5 L5 0.5Z" fill="#0a64d2"/></svg><svg class="a" style="left:514px;top:2px" width="5" height="4" viewBox="0 0 5 4"><path d="M0 0.5 L2.5 3.5 L5 0.5Z" fill="#0a64d2"/></svg><div class="a" style="left:14px;top:4px;width:496px;height:1px;background-image:linear-gradient(90deg,#1c78d8 1px,transparent 1px);background-size:3px 1px"></div></div>
<div class="t" style="left:607px;top:993px;"><span class="c">通</span><span class="c">过</span><span class="c">串</span><span class="c">口</span><span class="c">发</span><span class="c">送</span></div>
<svg class="a" style="left:687px;top:999px" width="7" height="4" viewBox="0 0 7 4"><path d="M0.5 0 H6.5 L3.5 3.6Z" fill="#111"/></svg>
<div class="chk" style="left:741px;top:993px"></div>
<div class="t" style="left:757px;top:993px;"><span style="margin-left:-0.3px"></span><span style="letter-spacing:-0.7px">H</span><span style="letter-spacing:-0.3px">e</span>x</div>
<div class="t" style="left:804px;top:993px;"><span class="c">发</span><span style="letter-spacing:0.3px"><span class="c">送</span></span><span style="letter-spacing:0.5px">:</span><span style="letter-spacing:0.3px">1</span><span style="letter-spacing:0.2px">0</span></div>
<svg class="a" style="left:1833px;top:990px" width="19" height="19" viewBox="0 0 19 19">
<defs><radialGradient id="sp" cx=".4" cy=".4" r=".7"><stop offset="0" stop-color="#d8d8d8"/><stop offset=".55" stop-color="#9a9a9a"/><stop offset="1" stop-color="#5e5e5e"/></radialGradient></defs>
<path d="M15 9.2 Q15.6 13.6 10.6 16 M16.8 9.8 Q17.4 15.4 11.8 17.8" fill="none" stroke="#8c8cff" stroke-width="1"/>
<g transform="rotate(-22 7.4 8)">
<ellipse cx="7.4" cy="8" rx="5.2" ry="6.6" fill="url(#sp)" stroke="#707070" stroke-width=".6"/>
<ellipse cx="6.9" cy="7.8" rx="3.1" ry="4.1" fill="#c4c4c4" stroke="#6a6a6a" stroke-width=".7"/>
<ellipse cx="6.7" cy="7.7" rx="1.4" ry="1.9" fill="#555"/>
<path d="M3.2 5.5 Q4.5 2.6 7 2.2" fill="none" stroke="#f4f4f4" stroke-width=".9"/>
</g></svg>
<div class="t" style="left:1854px;top:993px;"><span class="c">发</span><span class="c">送</span></div>
<svg class="a" style="left:1891px;top:999px" width="7" height="4" viewBox="0 0 7 4"><path d="M0.5 0 H6.5 L3.5 3.6Z" fill="#111"/></svg>
<div class="t" style="left:1631px;top:944px;font-size:20px;line-height:26px;color:#b9b9b9;letter-spacing:.95px"><span class="c">激</span><span class="c">活</span> Windows</div>
<div class="t" style="left:1631px;top:971px;font-size:15px;line-height:20px;color:#b9b9b9;letter-spacing:.6px"><span class="c">转</span><span class="c">到</span>“<span class="c">设</span><span class="c">置</span>”<span class="c">以</span><span class="c">激</span><span class="c">活</span> Windows<span class="c">。</span></div>
<div style="left:0px;top:1021px;width:1920px;height:1px;background:#dadada"></div>
</body></html>
